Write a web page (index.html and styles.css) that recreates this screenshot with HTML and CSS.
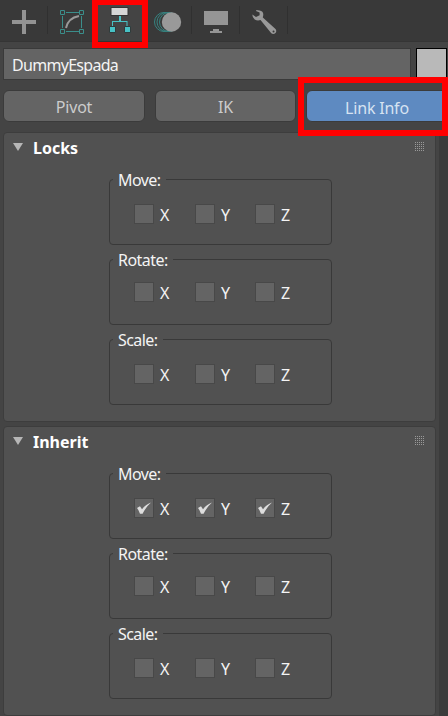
FILE: index.html
```html
<!DOCTYPE html>
<html lang="en">
<head>
<meta charset="utf-8">
<title>Hierarchy panel</title>
<link rel="stylesheet" href="styles.css">
</head>
<body>
<svg class="defs" width="0" height="0" aria-hidden="true">
  <defs>
    <pattern id="dots" width="2" height="2" patternUnits="userSpaceOnUse"><rect width="1" height="1" fill="#999"/></pattern>
    <symbol id="grip" viewBox="0 0 10 10"><rect width="10" height="10" fill="url(#dots)"/></symbol>
    <symbol id="check" viewBox="0 0 20 20"><path d="M3 10L6 8.200L8 11.300Q11.500 6.500 17 4.600Q11.500 9.500 8.600 15.800H6Q4.800 12 3 10Z" fill="#ddd"/></symbol>
  </defs>
</svg>
<div class="app">
  <nav class="toolbar">
    <div class="tab"><svg width="48" height="42"><path d="M22 10h4v10h10v4H26v10h-4V24H12v-4h10z" fill="#939393"/></svg></div>
    <div class="tab"><svg width="48" height="42" fill="none"><path d="M18 12.5h13M18 31.5h13M14.500 16v12M33.500 16v12" stroke="#3b8e8b"/><path d="M12.500 10.500h4v4h-4zM31.500 10.500h4v4h-4zM12.500 29.500h4v4h-4zM31.500 29.500h4v4h-4z" stroke="#3b8e8b"/><path d="M18 28Q20 18 31 16" stroke="#999" stroke-width="2"/></svg></div>
    <div class="tab tab-current"><svg width="48" height="42"><path d="M15 7.500h17v8H15z" fill="#d6d6d6" stroke="#333"/><path d="M23 16h2v5h6.500v5h-1v-4H17v4h-1v-5h7z" fill="#47c2c5"/><path d="M13.500 26.500h6v6h-6zM28.500 26.500h6v6h-6z" fill="#47c2c5" stroke="#303b3b"/></svg></div>
    <div class="tab"><svg width="48" height="42"><g fill="none" stroke="#368481"><circle cx="20" cy="22" r="9.500"/><circle cx="22.500" cy="22" r="9.500"/><circle cx="25" cy="22" r="9.500"/></g><circle cx="27.500" cy="22" r="9.700" fill="#999"/></svg></div>
    <div class="tab"><svg width="48" height="42"><path d="M12 11h24v14H12zM21 29h6v2h3v2H18v-2h3z" fill="#959595"/></svg></div>
    <div class="tab"><svg width="48" height="42"><path fill-rule="evenodd" d="M16.500 10L19.500 10.500Q23.500 11 23.300 15L22.800 17.500L35.500 29Q37 30.800 35.500 33Q33.300 34.700 31.300 33.200L20.500 20Q17.500 21.200 14.700 19.500Q12.300 17.500 12.300 14.500L16 17L19.600 15.300V12.500L16 11ZM33.500 30.500a1 1 0 1 0 .1 2a1 1 0 1 0-.1-2Z" fill="#999"/></svg></div>
    <span class="mark mark-tab"></span>
  </nav>
  <div class="name-row"><div class="name">DummyEspada</div><div class="swatch"></div></div>
  <div class="modes">
    <button class="mode">Pivot</button><button class="mode">IK</button><button class="mode mode-on">Link Info</button>
    <span class="mark mark-mode"></span>
  </div>
  <main class="scroll">
    <section class="panel">
      <header class="head"><i class="arrow"></i><h2>Locks</h2><svg class="grip"><use href="#grip"/></svg></header>
      <div class="groups">
        <div class="group"><span class="legend">Move:</span><div class="axes"><label><i class="box"></i>X</label><label><i class="box"></i>Y</label><label><i class="box"></i>Z</label></div></div>
        <div class="group group-rotate"><span class="legend">Rotate:</span><div class="axes"><label><i class="box"></i>X</label><label><i class="box"></i>Y</label><label><i class="box"></i>Z</label></div></div>
        <div class="group"><span class="legend">Scale:</span><div class="axes"><label><i class="box"></i>X</label><label><i class="box"></i>Y</label><label><i class="box"></i>Z</label></div></div>
      </div>
    </section>
    <section class="panel">
      <header class="head"><i class="arrow"></i><h2>Inherit</h2><svg class="grip"><use href="#grip"/></svg></header>
      <div class="groups">
        <div class="group"><span class="legend">Move:</span><div class="axes"><label><i class="box"><svg><use href="#check"/></svg></i>X</label><label><i class="box"><svg><use href="#check"/></svg></i>Y</label><label><i class="box"><svg><use href="#check"/></svg></i>Z</label></div></div>
        <div class="group group-rotate"><span class="legend">Rotate:</span><div class="axes"><label><i class="box"></i>X</label><label><i class="box"></i>Y</label><label><i class="box"></i>Z</label></div></div>
        <div class="group"><span class="legend">Scale:</span><div class="axes"><label><i class="box"></i>X</label><label><i class="box"></i>Y</label><label><i class="box"></i>Z</label></div></div>
      </div>
    </section>
  </main>
</div>
</body>
</html>
```
FILE: styles.css
```css
* { box-sizing: border-box; }
body { margin: 0; background: #444; color: #f4f4f4; font: 16px/20px "Noto Sans", sans-serif; }
svg { display: block; }
.defs { position: absolute; }
.app { width: 448px; height: 716px; overflow: hidden; background: #444; }
.toolbar { position: relative; display: flex; height: 42px; background: #393939; border-bottom: 1px solid #353535; }
.tab { width: 48px; height: 41px; background: linear-gradient(#303030, #303030) right 6px / 1px 28px no-repeat; }
.tab-current { background: #444; }
.mark { position: absolute; z-index: 2; border: 6px solid #f00; pointer-events: none; }
.mark-tab { left: 92px; top: 0; width: 56px; height: 48px; border-top-width: 5px; }
.name-row { display: flex; justify-content: space-between; height: 32px; margin: 6px 1px 0 3px; }
.name { width: 408px; height: 32px; padding: 6px 8px 0; border: 1px solid #3a3a3a; background: #646464; letter-spacing: -.7px; }
.swatch { width: 31px; height: 32px; border: 1px solid #000; background: #b9b9b9; }
.modes { position: relative; display: grid; grid-template-columns: 142px 141px 142px; gap: 10px; height: 52px; padding: 10px 0 0 3px; }
.mode { height: 32px; padding: 1px 0 0; border: 1px solid #3b3b3b; border-radius: 6px; background: #646464; color: #ccc; font: inherit; letter-spacing: -.2px; }
.mode-on { background: #5e8ac1; color: #d7e3f1; padding-top: 3px; }
.mark-mode { left: 298px; top: -3px; width: 150px; height: 59px; }
.scroll { height: 584px; padding-left: 3px; background: linear-gradient(#3b3b3b, #3b3b3b) right / 9px 100% no-repeat; }
.panel { width: 433px; height: 290px; margin-bottom: 4px; border: 1px solid #3d3d3d; border-radius: 4px; background: #515151; }
.head { display: flex; height: 30px; padding: 9px 10px 0 9px; }
.arrow { width: 10px; height: 8px; margin-top: 1px; background: #b6b6b6; clip-path: polygon(0 0, 100% 0, 50% 100%); }
h2 { flex: 1; margin: -4px 0 0 10px; color: #fff; font: bold 16px/20px "Noto Sans", sans-serif; letter-spacing: 0; }
.grip { width: 10px; height: 10px; }
.groups { display: grid; gap: 14px; width: 223px; margin: 16px 0 0 105px; }
.group { height: 66px; border: 1px solid #393939; border-radius: 4px; }
.legend { display: block; width: max-content; height: 20px; margin: -10px 0 0 3px; padding: 0 5px; background: #515151; letter-spacing: -.55px; }
.axes { display: grid; grid-template-columns: 61px 60px 60px; margin: 14px 0 0 24px; }
.group-rotate .axes { margin-top: 12px; }
label { display: flex; gap: 6px; height: 20px; line-height: 22px; }
.box { width: 20px; height: 20px; border: 1px solid #484848; background: #646464; }
.box svg { width: 20px; height: 20px; margin: -1px; }
```
